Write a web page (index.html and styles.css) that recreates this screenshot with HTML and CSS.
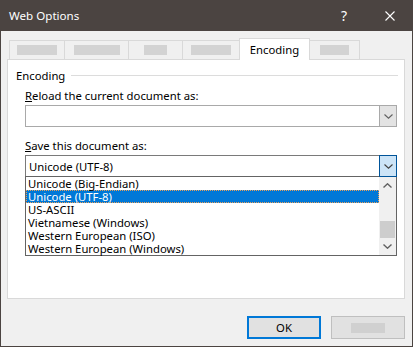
FILE: index.html
```html
<!DOCTYPE html>
<html lang="en">
<head>
    <meta charset="UTF-8">
    <title>Web Options</title>
    <link rel="stylesheet" href="styles.css">
</head>
<body>
    <div class="window">
        <div class="titlebar">
            <span class="title">Web Options</span>
            <span class="caption-btn help">?</span>
            <span class="caption-btn close">
                <svg width="10" height="10" viewBox="0 0 10 10"><path d="M0.5 0.5 L9.5 9.5 M9.5 0.5 L0.5 9.5" stroke="#fff" stroke-width="1.1" fill="none"/></svg>
            </span>
        </div>
        <div class="content">
            <div class="tabs">
                <div class="tab tab1"><span class="ph w40"></span></div>
                <div class="tab tab2"><span class="ph w46"></span></div>
                <div class="tab tab3"><span class="ph w23"></span></div>
                <div class="tab tab4"><span class="ph w40"></span></div>
                <div class="tab active">Encoding</div>
                <div class="tab tab6"><span class="ph w29"></span></div>
            </div>
            <div class="panel">
                <div class="group-head">
                    <span>Encoding</span>
                    <span class="rule"></span>
                </div>
                <div class="field">
                    <div class="label"><u>R</u>eload the current document as:</div>
                    <div class="combo">
                        <span class="value"></span>
                        <span class="drop">
                            <svg width="9" height="5" viewBox="0 0 9 5"><path d="M0.5 0.5 L4.5 4.2 L8.5 0.5" stroke="#606060" stroke-width="1.1" fill="none"/></svg>
                        </span>
                    </div>
                </div>
                <div class="field second">
                    <div class="label"><u>S</u>ave this document as:</div>
                    <div class="combo open">
                        <span class="value">Unicode (UTF-8)</span>
                        <span class="drop">
                            <svg width="9" height="5" viewBox="0 0 9 5"><path d="M0.5 0.5 L4.5 4.2 L8.5 0.5" stroke="#404040" stroke-width="1.1" fill="none"/></svg>
                        </span>
                    </div>
                    <div class="listbox">
                        <div class="items">
                            <div class="item">Unicode (Big-Endian)</div>
                            <div class="item selected">Unicode (UTF-8)</div>
                            <div class="item">US-ASCII</div>
                            <div class="item">Vietnamese (Windows)</div>
                            <div class="item">Western European (ISO)</div>
                            <div class="item">Western European (Windows)</div>
                        </div>
                        <div class="scrollbar">
                            <span class="arrow">
                                <svg width="9" height="5" viewBox="0 0 9 5"><path d="M0.5 4.5 L4.5 0.8 L8.5 4.5" stroke="#606060" stroke-width="1.4" fill="none"/></svg>
                            </span>
                            <span class="track"><span class="thumb"></span></span>
                            <span class="arrow">
                                <svg width="9" height="5" viewBox="0 0 9 5"><path d="M0.5 0.5 L4.5 4.2 L8.5 0.5" stroke="#606060" stroke-width="1.4" fill="none"/></svg>
                            </span>
                        </div>
                    </div>
                </div>
            </div>
            <div class="buttons">
                <button class="btn ok">OK</button>
                <button class="btn cancel"><span class="ph w34"></span></button>
            </div>
        </div>
    </div>
</body>
</html>
```

FILE: styles.css
```css
body {
    margin: 0;
    font-family: "Noto Sans", "Segoe UI", sans-serif;
    font-size: 11.3px;
    line-height: 15px;
    color: #000;
}
.window {
    width: 413px;
    height: 347px;
    box-sizing: border-box;
    border: 1px solid #4b4441;
    border-top: none;
    background: #f0f0f0;
}
.titlebar {
    height: 31px;
    background: #4b4441;
    color: #fff;
    display: flex;
    align-items: center;
    margin: 0 -1px;
    padding-left: 9px;
    font-size: 11.6px;
}
.title {
    flex: 1;
}
.caption-btn {
    width: 46px;
    height: 31px;
    display: flex;
    align-items: center;
    justify-content: center;
}
.help {
    font-size: 14px;
}
.content {
    padding: 7px 0 0 6px;
}
.tabs {
    display: flex;
    align-items: flex-end;
    height: 21px;
    padding-left: 2px;
}
.tab {
    box-sizing: border-box;
    height: 19px;
    border-top: 1px solid #d9d9d9;
    border-left: 1px solid #d9d9d9;
    display: flex;
    justify-content: center;
    align-items: center;
}
.tab1 { width: 55px; }
.tab2 { width: 64px; }
.tab3 { width: 54px; }
.tab4 { width: 57px; }
.tab6 {
    width: 50px;
    border-left: none;
    border-right: 1px solid #d9d9d9;
}
.tab.active {
    width: 71px;
    height: 22px;
    margin-bottom: -1px;
    border-right: 1px solid #d9d9d9;
    background: #fff;
    position: relative;
    z-index: 1;
    align-items: flex-start;
    padding-top: 3px;
}
.ph {
    display: block;
    height: 10px;
    background: #d3d3d3;
}
.w23 { width: 23px; }
.w29 { width: 29px; }
.w34 { width: 34px; background: #d0d0d0; }
.w40 { width: 40px; }
.w46 { width: 46px; }
.panel {
    box-sizing: border-box;
    width: 398px;
    height: 240px;
    border: 1px solid #d9d9d9;
    background: #fff;
    padding: 8px 6px 0 8px;
}
.group-head {
    display: flex;
    align-items: center;
    gap: 6px;
}
.rule {
    flex: 1;
    height: 1px;
    background: #dcdcdc;
}
.field {
    margin-left: 9px;
    margin-top: 5px;
}
.field.second {
    margin-top: 11px;
}
.label {
    margin-bottom: 2px;
}
.combo {
    box-sizing: border-box;
    width: 372px;
    height: 22px;
    border: 1px solid #a9a9a9;
    display: flex;
}
.combo .value {
    flex: 1;
    padding: 3px 0 0 3px;
}
.combo .drop {
    box-sizing: border-box;
    width: 17px;
    border-left: 1px solid #a9a9a9;
    background: #e3e3e3;
    display: flex;
    align-items: center;
    justify-content: center;
}
.combo.open {
    border-color: #7a7a7a;
}
.combo.open .drop {
    width: 18px;
    margin: -1px -1px -1px 0;
    border: 1px solid #005499;
    background: #cce4f7;
}
.listbox {
    box-sizing: border-box;
    width: 372px;
    height: 80px;
    margin-top: -1px;
    border: 1px solid #646464;
    display: flex;
}
.items {
    flex: 1;
    line-height: 13px;
}
.item {
    height: 13px;
    padding-left: 2px;
    box-sizing: border-box;
}
.item.selected {
    background: #0078d7;
    color: #fff;
    border: 1px dotted #e9a05a;
    line-height: 11px;
    padding-left: 1px;
}
.scrollbar {
    width: 17px;
    background: #f0f0f0;
    display: flex;
    flex-direction: column;
}
.arrow {
    height: 17px;
    display: flex;
    align-items: center;
    justify-content: center;
}
.track {
    flex: 1;
    display: flex;
    flex-direction: column;
    justify-content: flex-end;
    align-items: center;
}
.thumb {
    width: 15px;
    height: 17px;
    background: #cdcdcd;
}
.buttons {
    display: flex;
    justify-content: flex-end;
    gap: 10px;
    width: 398px;
    margin-top: 17px;
}
.btn {
    box-sizing: border-box;
    width: 74px;
    height: 23px;
    background: #e1e1e1;
    border: 1px solid #bfbfbf;
    font: inherit;
    color: #000;
    padding: 0;
    display: flex;
    align-items: center;
    justify-content: center;
}
.btn.ok {
    border: 2px solid #0078d7;
}
```
